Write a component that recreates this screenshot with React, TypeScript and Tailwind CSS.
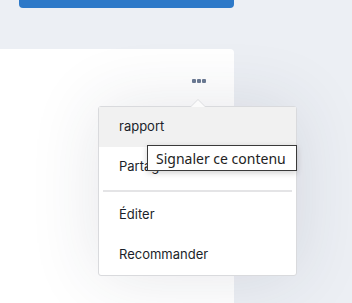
import React from 'react';

const items = ['rapport', 'Partager'];
const items2 = ['Éditer', 'Recommander'];

function Dots() {
  return (
    <div className="flex gap-[1px]">
      <span className="w-[4px] h-[4px] rounded-[1px] bg-[#6b7b94]" />
      <span className="w-[4px] h-[4px] rounded-[1px] bg-[#6b7b94]" />
      <span className="w-[4px] h-[4px] rounded-[1px] bg-[#6b7b94]" />
    </div>
  );
}

function Menu() {
  return (
    <div className="absolute left-[98px] top-[106px] w-[199px] rounded-[3px] border border-[#d9dadd] bg-white shadow-[0_0_70px_rgba(40,50,70,0.12)] font-['Inter',sans-serif] text-[13px] text-[#1b1f2a]">
      {/* caret */}
      <div className="absolute -top-[8px] left-[91px] w-0 h-0 border-x-[8px] border-x-transparent border-b-[8px] border-b-[#dcdde0]" />
      <div className="absolute -top-[7px] left-[92px] w-0 h-0 border-x-[7px] border-x-transparent border-b-[7px] border-b-[#fbfbfb]" />
      {items.map((label, i) => (
        <div
          key={label}
          className={`h-[40px] flex items-center pl-[20px] ${i === 0 ? 'bg-[#f1f1f1]' : ''}`}
        >
          {label}
        </div>
      ))}
      <div className="mx-[4px] my-[3px] h-[2px] bg-[#e4e4e6]" />
      {items2.map((label) => (
        <div key={label} className="h-[40px] flex items-center pl-[20px]">
          {label}
        </div>
      ))}
    </div>
  );
}

export default function App() {
  return (
    <div className="relative w-[352px] h-[303px] overflow-hidden bg-[#eceff4]">
      <div className="ml-[19px] w-[215px] h-[8px] rounded-b-[4px] bg-[#2d79c8]" />
      <div className="mt-[41px] w-[234px] h-[254px] rounded-tr-[4px] bg-white flex justify-end pt-[30px] pr-[28px]">
        <Dots />
      </div>
      <Menu />
      <div className="absolute left-[147px] top-[145px] w-[150px] h-[26px] border border-[#3a3a3a] bg-white shadow-[0_2px_6px_rgba(0,0,0,0.18)] flex items-center pl-[8px] font-['Noto_Sans',sans-serif] text-[14px] text-[#222] whitespace-nowrap">
        Signaler ce contenu
      </div>
    </div>
  );
}
